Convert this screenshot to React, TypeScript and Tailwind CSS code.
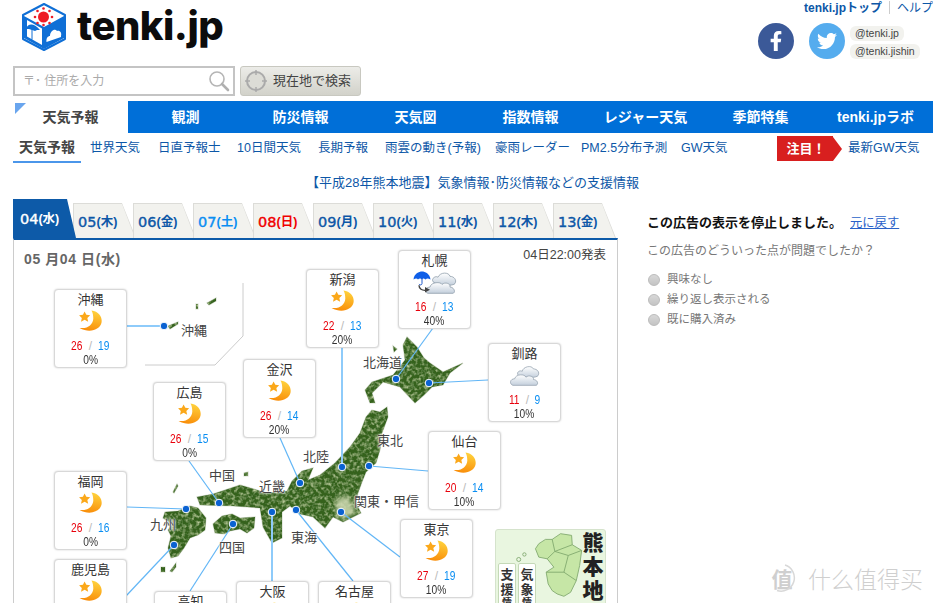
import React from 'react';
import { FaFacebookF, FaTwitter } from 'react-icons/fa';

const sans = "font-['Liberation_Sans','Noto_Sans_CJK_JP',sans-serif]";

const navItems = ['観測', '防災情報', '天気図', '指数情報', 'レジャー天気', '季節特集', 'tenki.jpラボ'];
const subItems = ['世界天気', '日直予報士', '10日間天気', '長期予報', '雨雲の動き(予報)', '豪雨レーダー', 'PM2.5分布予測', 'GW天気'];

const tabs = [
  { day: '05', week: '木', color: 'text-[#0d57a7]' },
  { day: '06', week: '金', color: 'text-[#0d57a7]' },
  { day: '07', week: '土', color: 'text-[#0a8ef2]' },
  { day: '08', week: '日', color: 'text-[#f00000]' },
  { day: '09', week: '月', color: 'text-[#0d57a7]' },
  { day: '10', week: '火', color: 'text-[#0d57a7]' },
  { day: '11', week: '水', color: 'text-[#0d57a7]' },
  { day: '12', week: '木', color: 'text-[#0d57a7]' },
  { day: '13', week: '金', color: 'text-[#0d57a7]' },
];

type Weather = 'moon' | 'cloud' | 'rain';

const cities: { name: string; pos: string; hi: number; lo: number; pop: number; icon: Weather }[] = [
  { name: '沖縄', pos: 'left-[40px] top-[49px]', hi: 26, lo: 19, pop: 0, icon: 'moon' },
  { name: '広島', pos: 'left-[139px] top-[142px]', hi: 26, lo: 15, pop: 0, icon: 'moon' },
  { name: '金沢', pos: 'left-[229px] top-[119px]', hi: 26, lo: 14, pop: 20, icon: 'moon' },
  { name: '新潟', pos: 'left-[292px] top-[29px]', hi: 22, lo: 13, pop: 20, icon: 'moon' },
  { name: '札幌', pos: 'left-[384px] top-[10px]', hi: 16, lo: 13, pop: 40, icon: 'rain' },
  { name: '釧路', pos: 'left-[474px] top-[103px]', hi: 11, lo: 9, pop: 10, icon: 'cloud' },
  { name: '仙台', pos: 'left-[414px] top-[191px]', hi: 20, lo: 14, pop: 10, icon: 'moon' },
  { name: '東京', pos: 'left-[386px] top-[279px]', hi: 27, lo: 19, pop: 10, icon: 'moon' },
  { name: '福岡', pos: 'left-[40px] top-[231px]', hi: 26, lo: 16, pop: 0, icon: 'moon' },
  { name: '鹿児島', pos: 'left-[40px] top-[319px]', hi: 26, lo: 17, pop: 0, icon: 'moon' },
  { name: '高知', pos: 'left-[140px] top-[351px]', hi: 24, lo: 15, pop: 0, icon: 'moon' },
  { name: '大阪', pos: 'left-[222px] top-[341px]', hi: 26, lo: 17, pop: 0, icon: 'moon' },
  { name: '名古屋', pos: 'left-[304px] top-[341px]', hi: 27, lo: 16, pop: 0, icon: 'moon' },
];

const regions = [
  { name: '沖縄', pos: 'left-[167px] top-[83px]' },
  { name: '北海道', pos: 'left-[349px] top-[115px]' },
  { name: '東北', pos: 'left-[363px] top-[193px]' },
  { name: '北陸', pos: 'left-[289px] top-[209px]' },
  { name: '関東・甲信', pos: 'left-[340px] top-[254px]' },
  { name: '東海', pos: 'left-[277px] top-[290px]' },
  { name: '近畿', pos: 'left-[245px] top-[239px]' },
  { name: '中国', pos: 'left-[195px] top-[228px]' },
  { name: '九州', pos: 'left-[136px] top-[277px]' },
  { name: '四国', pos: 'left-[205px] top-[300px]' },
];

// [x1, y1, x2, y2, thick]
const pins: [number, number, number, number, boolean][] = [
  [127, 326, 164, 326, true],
  [433, 328, 396, 379, false],
  [488, 380, 429, 383, false],
  [342, 348, 342, 467, true],
  [428, 471, 369, 466, false],
  [400, 557, 341, 512, false],
  [353, 581, 296, 510, false],
  [272, 581, 272, 512, true],
  [190, 591, 233, 524, false],
  [280, 438, 300, 483, false],
  [189, 461, 219, 503, false],
  [127, 507, 186, 509, false],
  [126, 596, 174, 545, false],
];

const land = [
  '407,337 417,347 424,358 430,363 443,372 463,363 450,373 443,385 432,387 424,395 415,403 400,387 383,382 372,393 375,403 370,403 365,390 372,382 393,375 405,360 403,345',
  '372,410 380,412 387,407 388,417 382,433 380,450 376,463 366,472 362,482 358,493 356,503 361,513 343,522 333,517 325,528 313,517 300,514 290,506 282,512 282,538 272,543 263,527 260,508 233,506 200,505 197,497 213,494 240,485 267,493 287,491 292,481 302,471 313,468 308,480 320,475 335,463 350,447 360,433 366,417',
  '165,512 178,511 190,506 198,508 206,518 205,530 198,535 190,538 184,548 178,556 171,558 168,548 171,536 168,530 172,524 163,518',
  '213,524 222,516 232,514 240,518 255,517 254,528 247,533 240,529 230,531 224,534 215,533',
  '173,492 177,484 178,486 174,493',
  '244,473 248,472 248,476 244,476',
  '161,567 165,567 165,572 161,572',
  '170,571 176,563 176,567 172,572',
  '207,303 216,298 216,301 209,305',
  '196,304 198,304 198,309 196,309',
  '168,326 178,322 178,324 170,329',
  '393,346 397,349 394,352',
];

function Moon() {
  return (
    <svg viewBox="0 0 26 24" className="h-[22px] w-[24px]">
      <defs>
        <linearGradient id="moonFill" x1="0.6" y1="0" x2="0.4" y2="1">
          <stop offset="0" stopColor="#ffd23c" />
          <stop offset="1" stopColor="#f98e0a" />
        </linearGradient>
      </defs>
      <path d="M13.500 .5C22 1.500 25.500 8 24.500 13.500 23 21 12 26 .5 19.500 9 21 15 16 15.500 9.500 15.500 6 15 3 13.500 .5Z" fill="url(#moonFill)" />
      <path d="M6 1.500l1.900 3.800 4.200.5-3.100 2.800.9 4.200-3.900-2.100-3.900 2.100.9-4.200L0 5.800l4.200-.5z" fill="#fba81a" />
    </svg>
  );
}

function Cloud() {
  return (
    <svg viewBox="0 0 32 28" preserveAspectRatio="none" className="h-[23px] w-[30px]">
      <defs>
        <linearGradient id="cloudFill" x1="0" y1="0" x2="0" y2="1">
          <stop offset="0" stopColor="#ffffff" />
          <stop offset="1" stopColor="#c3cfdc" />
        </linearGradient>
      </defs>
      <path d="M9 14C6 10 11 7 13 9 14 3 23 1 25 6 29 6 32 10 30 14 29 17 13 18 9 14Z" fill="url(#cloudFill)" stroke="#8c9aa8" strokeWidth=".8" />
      <path d="M3 26C-1 24 0 18 5 18 6 12 16 12 17 16 20 13 26 15 25 19 29 19 31 24 28 26Z" fill="url(#cloudFill)" stroke="#8c9aa8" strokeWidth=".8" />
    </svg>
  );
}

function RainCloud() {
  return (
    <svg viewBox="0 0 44 28" preserveAspectRatio="none" className="h-[25px] w-[44px]">
      <defs>
        <linearGradient id="rainCloudFill" x1="0" y1="0" x2="0" y2="1">
          <stop offset="0" stopColor="#ffffff" />
          <stop offset="1" stopColor="#c3cfdc" />
        </linearGradient>
      </defs>
      <path d="M20 12C18 8 23 5 25 7 27 1 36 1 37 6 41 6 44 10 42 14 41 17 24 17 20 12Z" fill="url(#rainCloudFill)" stroke="#8c9aa8" strokeWidth=".8" />
      <path d="M15 25C11 24 12 18 17 18 18 12 28 12 29 15 32 12 38 14 37 18 41 18 43 24 40 25Z" fill="url(#rainCloudFill)" stroke="#8c9aa8" strokeWidth=".8" />
      <path d="M.5 9.500C1 3 6 .5 9 .5S17 3 17.500 9.500C15 8 14 8 12.500 9.500 11 8 9.500 8 9 9.500 8 8 6 8 5 9.500 4 8 2.500 8 .5 9.500Z" fill="#0f5fe8" />
      <path d="M9 8v6c0 2-2.500 2-3 .5" fill="none" stroke="#1450c8" strokeWidth="1" />
      <path d="M6 16c0 4 3 6 7 5.500" fill="none" stroke="#444" strokeWidth="1.400" />
      <path d="M12 18l5 3-5 3z" fill="#444" />
    </svg>
  );
}

function CityCard({ name, pos, hi, lo, pop, icon }: (typeof cities)[number]) {
  return (
    <div className={`absolute ${pos} flex h-[79px] w-[73px] flex-col items-center rounded-[4px] border border-[#d8d8d8] bg-white shadow-[0_0_2px_rgba(0,0,0,0.2)] ${sans}`}>
      <div className="mt-[1px] h-[18px] text-[13px] leading-[18px] text-[#333]">{name}</div>
      <div className="flex h-[29px] items-start justify-center pt-[1px]">
        {icon === 'moon' && <Moon />}
        {icon === 'cloud' && <Cloud />}
        {icon === 'rain' && <RainCloud />}
      </div>
      <div className="mt-[1px] flex h-[14px] items-center gap-[5px] text-[12px] leading-[14px]">
        <span className="scale-x-[0.85] text-[#e8000b]">{hi}</span>
        <span className="text-[#bbb]">/</span>
        <span className="scale-x-[0.85] text-[#0a8ef2]">{lo}</span>
      </div>
      <div className="h-[14px] scale-x-[0.85] text-[12px] leading-[14px] text-[#333]">{pop}%</div>
    </div>
  );
}

function JapanMap() {
  return (
    <svg viewBox="14 240 604 363" className="absolute left-0 top-0 h-[363px] w-[604px]">
      <defs>
        <clipPath id="landClip">
          {land.map((p) => (
            <polygon key={p} points={p} />
          ))}
        </clipPath>
        <filter id="terrain" x="0" y="0" width="100%" height="100%">
          <feTurbulence type="fractalNoise" baseFrequency="0.28" numOctaves="2" seed="7" />
          <feColorMatrix values="0 0 0 0 0.62  0 0 0 0 0.70  0 0 0 0 0.42  2 0 0 0 -0.85" />
        </filter>
        <filter id="soft">
          <feGaussianBlur stdDeviation="2" />
        </filter>
        <filter id="edge">
          <feGaussianBlur stdDeviation="0.4" />
        </filter>
      </defs>
      <polyline points="243,283 243,336 215,365 145,365" fill="none" stroke="#ccc" strokeWidth="1" />
      <g stroke="#8a9a78" strokeWidth="1.200" strokeOpacity=".35" fill="none">
        {land.map((p) => (
          <polygon key={p} points={p} />
        ))}
      </g>
      <g filter="url(#edge)">
        <g clipPath="url(#landClip)">
          <rect x="150" y="290" width="330" height="290" fill="#35621f" />
          <rect x="150" y="290" width="330" height="290" filter="url(#terrain)" />
          <polygon points="336,499 348,496 356,513 343,519 336,514" fill="#cfd9b2" fillOpacity=".85" filter="url(#soft)" />
        </g>
      </g>
      {pins.map(([x1, y1, x2, y2, thick]) => (
        <g key={`${x1}-${y1}`}>
          <line x1={x1} y1={y1} x2={x2} y2={y2} stroke={thick ? '#8ecbfa' : '#62b6f6'} strokeWidth={thick ? 2 : 1.2} />
          <circle cx={x2} cy={y2} r="3.800" fill="#0a62d2" stroke="#fff" strokeWidth="1" />
        </g>
      ))}
    </svg>
  );
}

function KumamotoBanner() {
  return (
    <div className={`absolute left-[481px] top-[289px] h-[90px] w-[111px] overflow-hidden rounded-[3px] border border-[#d5e3cc] bg-[#e9f6e0] ${sans}`}>
      <svg viewBox="70 20 215 200" className="absolute left-[16px] top-[2px] h-[67px] w-[72px]">
        <path d="M140 70L150 55 170 42 190 42 215 25 248 30 250 58 278 75 272 120 262 165 245 200 225 212 205 205 190 195 178 175 172 140 195 125 175 100 150 95Z" fill="#c6e6a6" stroke="#7da56a" strokeWidth="2.500" />
        <path d="M190 42L198 78 250 58M198 78L175 100M198 78L238 90 225 140 172 140M238 90L278 75M225 140L262 165" fill="none" stroke="#7da56a" strokeWidth="2.500" />
        <circle cx="90" cy="102" r="6" fill="#e9f6e0" stroke="#7da56a" strokeWidth="2.500" />
        <circle cx="107" cy="87" r="5" fill="#e9f6e0" stroke="#7da56a" strokeWidth="2.500" />
      </svg>
      <div className="absolute right-[0px] top-[1px] flex w-[24px] flex-col items-center text-[21px] font-black leading-[24px] text-[#222]">
        <span>熊</span>
        <span>本</span>
        <span>地</span>
        <span>震</span>
      </div>
      <div className="absolute left-[2px] top-[33px] flex gap-[2px]">
        {[['支', '援'], ['気', '象']].map(([a, b]) => (
          <div key={a} className="flex h-[60px] w-[18px] flex-col items-center rounded-[2px] border border-[#c5d9b8] bg-white pt-[3px] text-[13px] font-bold leading-[15px] text-[#333]">
            <span>{a}</span>
            <span>{b}</span>
            <span className="text-[10px] leading-[12px]">情</span>
            <span className="text-[10px] leading-[12px]">報</span>
          </div>
        ))}
      </div>
    </div>
  );
}

function Logo() {
  return (
    <svg viewBox="0 0 44 48" className="h-[48px] w-[44px]">
      <path d="M22 1L43 12V36L22 47 1 36V12Z" fill="#fff" stroke="#0f6fd6" strokeWidth="2" strokeLinejoin="round" />
      <path d="M2 13L22 24 42 13V35L22 46 2 35Z" fill="#0f6fd6" />
      <path d="M5 17L20 25.500V42L5 33.500Z" fill="#fff" />
      <path d="M4 26C6 20 12 20 18 27L15 27 13 28 10 27 7 26Z" fill="#0f6fd6" />
      <path d="M10 26V36C10 38 7.500 37.500 7.500 35.500" fill="none" stroke="#0f6fd6" strokeWidth="1" />
      <path d="M24.500 39C24 35 26 33 28 33 28 28 33 25 35 28 38 27 40 30 39 33V34Z" fill="#fff" />
      <circle cx="21.500" cy="14" r="5.500" fill="#ee1c25" />
      <g fill="#ee1c25">
        <circle cx="21.500" cy="5.500" r="1.300" />
        <circle cx="21.500" cy="22" r="1.300" />
        <circle cx="13" cy="14" r="1.300" />
        <circle cx="30" cy="14" r="1.300" />
        <circle cx="15.500" cy="8" r="1.300" />
        <circle cx="27.500" cy="8" r="1.300" />
        <circle cx="15.500" cy="20" r="1.300" />
        <circle cx="27.500" cy="20" r="1.300" />
      </g>
    </svg>
  );
}

export default function App() {
  return (
    <div className={`relative h-[603px] w-[933px] overflow-hidden bg-white ${sans}`}>
      {/* Header */}
      <div className="flex h-[66px] justify-between">
        <div className="ml-[22px] mt-[3px] flex items-start">
          <Logo />
          <span className="ml-[11px] mt-[-2px] whitespace-nowrap font-['Inter',sans-serif] text-[40px] font-extrabold leading-[50px] tracking-[-0.5px] text-[#0c0c0c]">
            tenki.jp
          </span>
        </div>
        <div className="flex w-[175px] flex-col">
          <div className="ml-[46px] flex h-[15px] items-center whitespace-nowrap text-[12px]">
            <span className="font-bold text-[#0d57a7]">tenki.jpトップ</span>
            <span className="mx-[7px] h-[13px] w-px bg-[#ccc]" />
            <span className="text-[#0d57a7]">ヘルプ</span>
          </div>
          <div className="mt-[8px] flex items-start">
            <div className="flex h-[36px] w-[36px] items-center justify-center rounded-full bg-[#3b5998] text-[20px] text-white">
              <FaFacebookF />
            </div>
            <div className="ml-[15px] flex h-[36px] w-[36px] items-center justify-center rounded-full bg-[#55acee] text-[20px] text-white">
              <FaTwitter />
            </div>
            <div className="ml-[5px] mt-[3px] flex flex-col items-start gap-[3px] whitespace-nowrap text-[10.500px] leading-[15px] text-[#444]">
              <span className="rounded-[6px] bg-[#f2f2ee] px-[5px]">@tenki.jp</span>
              <span className="rounded-[6px] bg-[#f2f2ee] px-[5px]">@tenki.jishin</span>
            </div>
          </div>
        </div>
      </div>

      {/* Search */}
      <div className="ml-[13px] flex h-[30px] gap-[5px]">
        <div className="flex w-[222px] items-center justify-between border-2 border-[#c4c4c4] pl-[8px] pr-[3px]">
          <span className="text-[12px] text-[#aaa]">〒･ 住所を入力</span>
          <svg viewBox="0 0 22 22" className="h-[22px] w-[22px]">
            <circle cx="9" cy="9" r="7" fill="none" stroke="#b5b5b5" strokeWidth="1.600" />
            <path d="M14 14l6 6" stroke="#b0b0b0" strokeWidth="2.600" strokeLinecap="round" />
          </svg>
        </div>
        <div className="flex w-[121px] items-center rounded-[3px] border border-[#c8c8c0] bg-gradient-to-b from-[#ecece8] to-[#d2d2ca] pl-[4px]">
          <svg viewBox="0 0 22 22" className="h-[22px] w-[22px]">
            <circle cx="11" cy="11" r="9" fill="#dcdcd6" stroke="#aaa" strokeWidth="2" />
            <path d="M11 0v5M11 17v5M0 11h5M17 11h5" stroke="#aaa" strokeWidth="1.500" />
          </svg>
          <span className="ml-[6px] whitespace-nowrap text-[13px] text-[#444]">現在地で検索</span>
        </div>
      </div>

      {/* Main nav */}
      <div className="relative mt-[5px] grid h-[32px] grid-cols-[128px_repeat(7,115px)] text-[14px] font-bold">
        <div className="relative flex items-center justify-center pl-[13px] text-[#444]">
          天気予報
          <div className="absolute left-[15px] top-[2px] h-0 w-0 border-r-[11px] border-t-[11px] border-r-transparent border-t-[#69a5ee]" />
        </div>
        {navItems.map((item) => (
          <div key={item} className="flex items-center justify-center whitespace-nowrap bg-[#006fd8] text-white">
            {item}
          </div>
        ))}
      </div>

      {/* Sub nav */}
      <div className="flex h-[30px] items-start pl-[13px] text-[12.500px] text-[#0d57a7]">
        <div className="flex h-[30px] w-[68px] shrink-0 items-center justify-center border-b-2 border-[#4b96ea] text-[14px] font-bold text-[#444]">
          天気予報
        </div>
        <div className="ml-[9px] grid h-[30px] shrink-0 grid-cols-[68px_79px_81px_67px_110px_86px_100px_96px] items-center whitespace-nowrap">
          {subItems.map((item) => (
            <span key={item}>{item}</span>
          ))}
        </div>
        <div className="mt-[3px] flex h-[25px] shrink-0 items-center">
          <div className="flex h-[25px] w-[56px] items-center justify-center bg-[#d81f1f] pl-[2px] text-[13px] font-bold text-white">注目！</div>
          <div className="h-0 w-0 border-y-[12.5px] border-l-[9px] border-y-transparent border-l-[#d81f1f]" />
          <span className="ml-[6px] whitespace-nowrap">最新GW天気</span>
        </div>
      </div>

      {/* Notice */}
      <div className="ml-[306px] flex h-[36px] items-center whitespace-nowrap pt-[3px] text-[13px] text-[#0d57a7]">
        【平成28年熊本地震】気象情報･防災情報などの支援情報
      </div>

      <div className="flex pl-[13px]">
        {/* Forecast */}
        <div className="w-[605px] shrink-0">
          <div className="flex h-[39px] items-end">
            <div className="z-10 -mr-[3px] flex h-[39px] w-[63px] shrink-0 items-center bg-[#0d5aa8] pl-[7px] pt-[2px] text-white [clip-path:polygon(0_0,54px_0,63px_100%,0_100%)]">
              <span className="font-['DejaVu_Sans',sans-serif] text-[14.500px] leading-none [-webkit-text-stroke:0.4px]">04</span>
              <span className="text-[12.500px] font-bold leading-none">(水)</span>
            </div>
            {tabs.map((t) => (
              <div key={t.day} className="-mr-[3px] h-[35px] w-[63px] shrink-0 bg-[#dcdcd8] pl-px pt-px [clip-path:polygon(0_0,49px_0,63px_100%,0_100%)]">
                <div className={`flex h-full items-center bg-[#f2f2ee] pl-[4px] pt-[2px] [clip-path:polygon(0_0,48px_0,61px_100%,0_100%)] ${t.color}`}>
                  <span className="font-['DejaVu_Sans',sans-serif] text-[14.500px] leading-none [-webkit-text-stroke:0.4px]">{t.day}</span>
                  <span className="text-[12.500px] font-bold leading-none">({t.week})</span>
                </div>
              </div>
            ))}
          </div>
          <div className="relative h-[365px] border-x border-t-2 border-x-[#ccc] border-t-[#0d5aa8]">
            <div className="flex items-center justify-between pl-[10px] pr-[11px] pt-[6px]">
              <span className="mt-[3px] whitespace-nowrap text-[14px] font-bold tracking-[0.6px] text-[#666]">05 月04 日(水)</span>
              <span className="mb-[5px] text-[12.500px] text-[#444]">04日22:00発表</span>
            </div>
            <JapanMap />
            {regions.map((r) => (
              <div key={r.name} className={`absolute ${r.pos} whitespace-nowrap text-[13px] leading-[16px] text-[#444] [text-shadow:0_0_2px_#fff,0_0_2px_#fff,0_0_3px_#fff]`}>
                {r.name}
              </div>
            ))}
            {cities.map((c) => (
              <CityCard key={c.name} {...c} />
            ))}
            <KumamotoBanner />
          </div>
        </div>

        {/* Ad feedback */}
        <div className="ml-[29px] pt-[14px]">
          <div className="flex items-center whitespace-nowrap text-[13px]">
            <span className="font-bold text-[#111]">この広告の表示を停止しました。</span>
            <span className="ml-[8px] text-[12.300px] text-[#2a62c9] underline">元に戻す</span>
          </div>
          <div className="mt-[9px] whitespace-nowrap text-[12px] text-[#777]">この広告のどういった点が問題でしたか？</div>
          <div className="mt-[10px] flex flex-col">
            {['興味なし', '繰り返し表示される', '既に購入済み'].map((label) => (
              <div key={label} className="flex h-[20px] items-center text-[11.500px] text-[#777]">
                <span className="ml-[1px] h-[12px] w-[12px] rounded-full border border-[#bbb] bg-gradient-to-b from-[#d8d8d8] to-[#c4c4c4]" />
                <span className="ml-[7px]">{label}</span>
              </div>
            ))}
          </div>
        </div>
      </div>

      {/* Watermark */}
      <div className="absolute left-[767px] top-[564px] flex items-center font-['Noto_Sans_CJK_SC',sans-serif] text-[#cfcfcf]">
        <div className="relative flex h-[28px] w-[30px] items-center justify-center text-[21px] font-bold leading-none">
          值
          <svg viewBox="0 0 30 28" className="absolute left-0 top-0 h-[28px] w-[30px]">
            <path d="M18 1A13 13 0 0 1 10 26.500" fill="none" stroke="#d8d8d8" strokeWidth="1.500" />
          </svg>
        </div>
        <span className="ml-[11px] text-[23px] font-light leading-[28px]">什么值得买</span>
      </div>
    </div>
  );
}
